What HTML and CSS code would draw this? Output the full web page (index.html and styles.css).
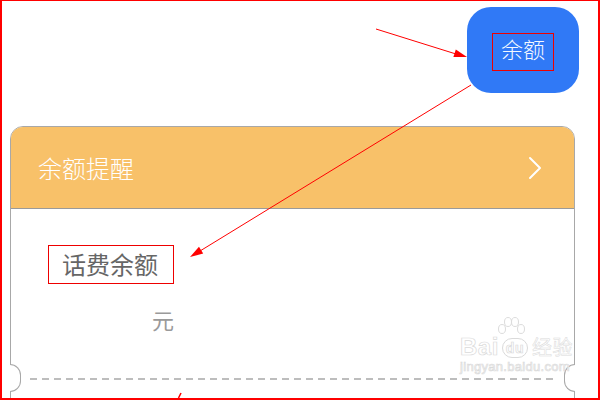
FILE: index.html
```html
<!DOCTYPE html>
<html lang="zh">
<head>
<meta charset="utf-8">
<link rel="stylesheet" href="styles.css">
</head>
<body>
<div class="frame">
  <div class="top">
    <div class="btn"><span class="btn-label">余额</span></div>
  </div>
  <div class="card">
    <div class="card-head">
      <span class="card-title">余额提醒</span>
      <svg class="chev" width="14" height="24" viewBox="0 0 14 24"><path d="M2 2 L12 12 L2 22" fill="none" stroke="#fff" stroke-width="2" stroke-linecap="round" stroke-linejoin="round"/></svg>
    </div>
    <div class="card-body">
      <span class="label">话费余额</span>
      <div class="unit">元</div>
      <div class="divider"></div>
    </div>
  </div>
  <div class="watermark">
    <svg class="paw" width="30" height="18" viewBox="0 0 30 18">
      <ellipse cx="6" cy="12" rx="3.5" ry="4.5" fill="#fff" stroke="#dcdcdc"/>
      <ellipse cx="12" cy="5" rx="3.5" ry="4.5" fill="#fff" stroke="#dcdcdc"/>
      <ellipse cx="19" cy="5" rx="3.5" ry="4.5" fill="#fff" stroke="#dcdcdc"/>
      <ellipse cx="25" cy="12" rx="3.5" ry="4.5" fill="#fff" stroke="#dcdcdc"/>
    </svg>
    <div class="wm-main">Bai<span class="wm-du">du</span><span class="wm-cn">经验</span></div>
    <div class="wm-url">jingyan.baidu.com</div>
  </div>
  <svg class="arrows" width="600" height="400" viewBox="0 0 600 400">
    <line x1="376" y1="29" x2="456" y2="54" stroke="#f00" stroke-width="1"/>
    <polygon points="467,57 453.4,57.0 455.8,49.4" fill="#f00"/>
    <line x1="471" y1="85" x2="200" y2="251" stroke="#f00" stroke-width="1"/>
    <polygon points="190,257 199.0,246.8 203.2,253.6" fill="#f00"/>
    <line x1="178.5" y1="398" x2="181" y2="393" stroke="#f00" stroke-width="1.5"/>
  </svg>
</div>
</body>
</html>
```
FILE: styles.css
```css
html, body {
  margin: 0;
  padding: 0;
  background: #fff;
}
.frame {
  position: relative;
  width: 600px;
  height: 400px;
  box-sizing: border-box;
  border-style: solid;
  border-color: #f00;
  border-width: 1px 2px 2px 2px;
  overflow: hidden;
  font-family: "Noto Sans CJK SC", "Noto Sans", sans-serif;
}
.top {
  display: flex;
  justify-content: flex-end;
  padding: 6px 19px 0 0;
}
.btn {
  width: 112px;
  height: 86px;
  box-sizing: border-box;
  background: #3079f6;
  border-radius: 24px;
  display: flex;
  justify-content: center;
  align-items: flex-start;
  padding-top: 26px;
}
.btn-label {
  color: #f4f8ff;
  font-size: 22px;
  line-height: 22px;
  font-weight: 300;
  padding: 3px 8px 11px 8px;
  border: 1px solid #e00;
}
.card {
  margin: 33px 0 0 8px;
  width: 565px;
  height: 400px;
  box-sizing: border-box;
  border: 1px solid #a8a8a8;
  border-radius: 13px;
}
.card-head {
  height: 82px;
  box-sizing: border-box;
  background: #f8c169;
  border-bottom: 1px solid #9a9a9a;
  border-radius: 12px 12px 0 0;
  display: flex;
  justify-content: space-between;
  align-items: center;
  padding: 0 32px 0 27px;
}
.card-title {
  color: #fff;
  font-size: 24px;
  line-height: 24px;
  font-weight: 300;
}
.chev {
  display: block;
}
.card-body {
  padding: 36px 0 0 37px;
}
.label {
  display: inline-block;
  color: #666;
  font-size: 24px;
  line-height: 24px;
  font-weight: 400;
  padding: 6px 15px 7px 13px;
  border: 1px solid #e00;
}
.unit {
  color: #9a9a9a;
  font-size: 22px;
  line-height: 22px;
  margin: 24px 0 0 104px;
}
.divider {
  position: relative;
  margin: 48px 18px 0 -18px;
  height: 2px;
  background: repeating-linear-gradient(to right, #bdbdbd 0 7px, transparent 7px 12px);
}
.divider::before,
.divider::after {
  content: "";
  position: absolute;
  top: -14px;
  width: 11px;
  height: 28px;
  background: #fff;
  border: 1px solid #a8a8a8;
  box-sizing: border-box;
}
.divider::before {
  left: -20px;
  border-left: none;
  border-radius: 0 14px 14px 0;
}
.divider::after {
  right: -19px;
  border-right: none;
  border-radius: 14px 0 0 14px;
}
.watermark {
  position: absolute;
  left: 458px;
  top: 316px;
  color: #fff;
  font-family: "Liberation Sans", sans-serif;
  -webkit-text-stroke: 0.7px #dadada;
}
.paw {
  display: block;
  margin-left: 36px;
}
.wm-main {
  font-size: 24px;
  line-height: 24px;
  font-weight: bold;
  letter-spacing: 0.5px;
  white-space: nowrap;
}
.wm-du {
  display: inline-block;
  font-size: 14px;
  line-height: 18px;
  padding: 0 3px;
  margin: 0 4px 0 3px;
  border: 1px solid #dadada;
  border-radius: 10px;
  vertical-align: 2px;
}
.wm-cn {
  font-family: "Noto Sans CJK SC", sans-serif;
  font-weight: 400;
  font-size: 20px;
  -webkit-text-stroke: 0.5px #dadada;
}
.wm-url {
  font-size: 13px;
  line-height: 16px;
  letter-spacing: 0.3px;
}
.arrows {
  position: absolute;
  left: -2px;
  top: -1px;
  pointer-events: none;
}
```
